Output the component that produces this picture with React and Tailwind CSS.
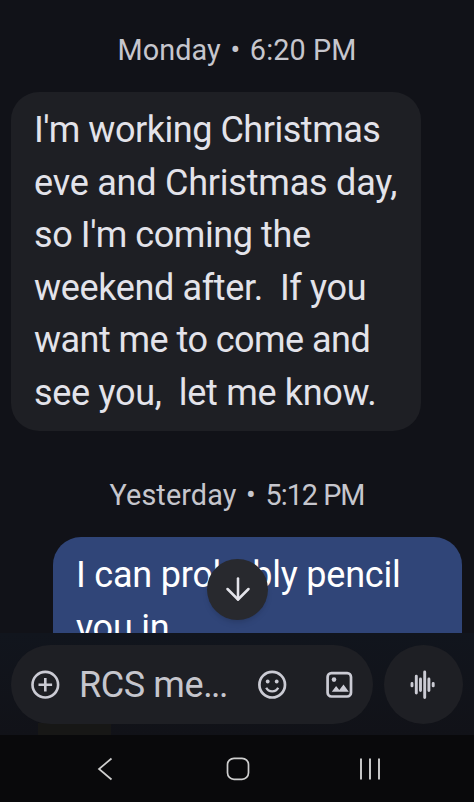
import { ArrowDown } from "lucide-react";

const incoming = [
  { text: "I'm working Christmas", spacing: "tracking-[-0.47px]" },
  { text: "eve and Christmas day,", spacing: "tracking-[-0.22px]" },
  { text: "so I'm coming the", spacing: "tracking-[-0.42px]" },
  { text: "weekend after.  If you", spacing: "tracking-[-0.36px]" },
  { text: "want me to come and", spacing: "tracking-[-0.54px]" },
  { text: "see you,  let me know.", spacing: "tracking-[-0.3px]" },
];

function Timestamp({ day, time, className, timeClass }) {
  return (
    <div className={`flex justify-center items-center text-[28.8px] leading-[36px] whitespace-pre text-[#c6c6cd] ${className}`}>
      <span>{day}</span>
      <span className="w-[29px] text-center">•</span>
      <span className={timeClass}>{time}</span>
    </div>
  );
}

function PlusIcon() {
  return (
    <svg width="30" height="30" viewBox="0 0 30 30" fill="none" stroke="#cbcbd4" strokeWidth="2.6">
      <circle cx="15.3" cy="14.7" r="12.8" />
      <path d="M15.3 7.9v13.6M8.5 14.7h13.6" />
    </svg>
  );
}

function SmileIcon() {
  return (
    <svg width="30" height="30" viewBox="0 0 30 30" fill="none" stroke="#cbcbd4" strokeWidth="2.7">
      <circle cx="15.2" cy="14.7" r="12.8" />
      <circle cx="10.7" cy="11.5" r="1.9" fill="#cbcbd4" stroke="none" />
      <circle cx="19.7" cy="11.5" r="1.9" fill="#cbcbd4" stroke="none" />
      <path d="M9.2 17.8c1.2 2.4 3.4 3.6 6 3.6s4.8-1.2 6-3.6" strokeWidth="2.3" />
    </svg>
  );
}

function PictureIcon() {
  return (
    <svg width="28" height="28" viewBox="0 0 28 28" fill="none">
      <rect x="2.6" y="2.1" width="23.4" height="23.4" rx="3.8" stroke="#cbcbd4" strokeWidth="2.7" />
      <circle cx="9" cy="8.6" r="2.3" fill="#cbcbd4" />
      <path d="M6.800 20.800l4.300-5.800 3.200 4 4.200-5.500 5.300 7.300z" fill="#cbcbd4" />
    </svg>
  );
}

function VoiceIcon() {
  return (
    <svg width="28" height="30" viewBox="0 0 28 30" stroke="#cbcbd4" strokeWidth="2.9" strokeLinecap="round">
      <path d="M2 13.500v2.400M6.300 6.300v16.800M10.500 9v11.500M14.700 2v25.500M18.900 9v11.500M23.200 13.500v2.400" />
    </svg>
  );
}

function NavBar() {
  return (
    <nav className="h-[67px] shrink-0 bg-[#09090b] flex justify-between items-center pl-[93px] pr-[92px]">
      <svg width="24" height="26" viewBox="0 0 24 26" fill="none" stroke="#cfcfcf" strokeWidth="1.7">
        <path d="M18.500 2.500L6 13l12.500 10.500" />
      </svg>
      <svg width="26" height="26" viewBox="0 0 26 26" fill="none" stroke="#cfcfcf" strokeWidth="1.7">
        <rect x="2.500" y="2.300" width="21" height="21" rx="6.500" />
      </svg>
      <svg width="24" height="26" viewBox="0 0 24 26" fill="none" stroke="#cfcfcf" strokeWidth="1.9">
        <path d="M3 2.500v21M12 2.500v21M21 2.500v21" />
      </svg>
    </nav>
  );
}

export default function App() {
  return (
    <div className="w-[474px] h-[802px] flex flex-col overflow-hidden bg-[#111218] font-['Roboto',sans-serif]">
      <main className="h-[633px] shrink-0 overflow-hidden relative">
        <Timestamp day="Monday" time="6:20 PM" className="pt-[32px] tracking-[0.1px]" />

        <div className="mt-[24px] ml-[11px] w-[410px] h-[339px] rounded-[28px] bg-[#1e1f24] pl-[23px] pt-[12px] text-[36px] leading-[52.6px] text-[#e3e3ea]">
          {incoming.map((line) => (
            <p key={line.text} className={`whitespace-pre ${line.spacing}`}>
              {line.text}
            </p>
          ))}
        </div>

        <Timestamp day="Yesterday" time="5:12 PM" className="mt-[46px] tracking-[0.1px]" timeClass="tracking-[-1px]" />

        <div className="mt-[24px] ml-[53px] w-[409px] h-[140px] rounded-t-[28px] bg-[#304578] pl-[23px] pt-[12px] text-[36px] leading-[52.6px] tracking-[-0.2px] text-white">
          <p className="whitespace-pre">I can probably pencil</p>
          <p className="whitespace-pre">you in.</p>
        </div>

        {/* Scroll to latest */}
        <button className="absolute left-[207px] top-[558.5px] size-[61px] rounded-full bg-[#28292e] shadow-md flex items-center justify-center">
          <ArrowDown className="size-[36px] text-[#e3e3ea]" strokeWidth={1.7} />
        </button>
      </main>

      <footer className="relative h-[102px] shrink-0 flex items-start gap-[11px] pt-[12px] pl-[11px] bg-linear-to-b from-[#11151d] to-[#111218]">
        {/* Faint tint of the message behind the composer */}
        <div className="absolute left-[38px] bottom-0 w-[73px] h-[12px] bg-[#171716]" />
        <div className="relative w-[362px] h-[79px] rounded-full bg-[#1e1f24] flex items-center pl-[19px] pr-[20px]">
          <PlusIcon />
          <span className="ml-[19px] flex-1 text-[36px] tracking-[-0.4px] text-[#c6c6cd] whitespace-nowrap">
            RCS me<span className="tracking-[-1.6px]">...</span>
          </span>
          <SmileIcon />
          <span className="w-[38px]" />
          <PictureIcon />
        </div>
        <button className="size-[79px] rounded-full bg-[#1e1f24] flex items-center justify-center">
          <VoiceIcon />
        </button>
      </footer>

      <NavBar />
    </div>
  );
}
